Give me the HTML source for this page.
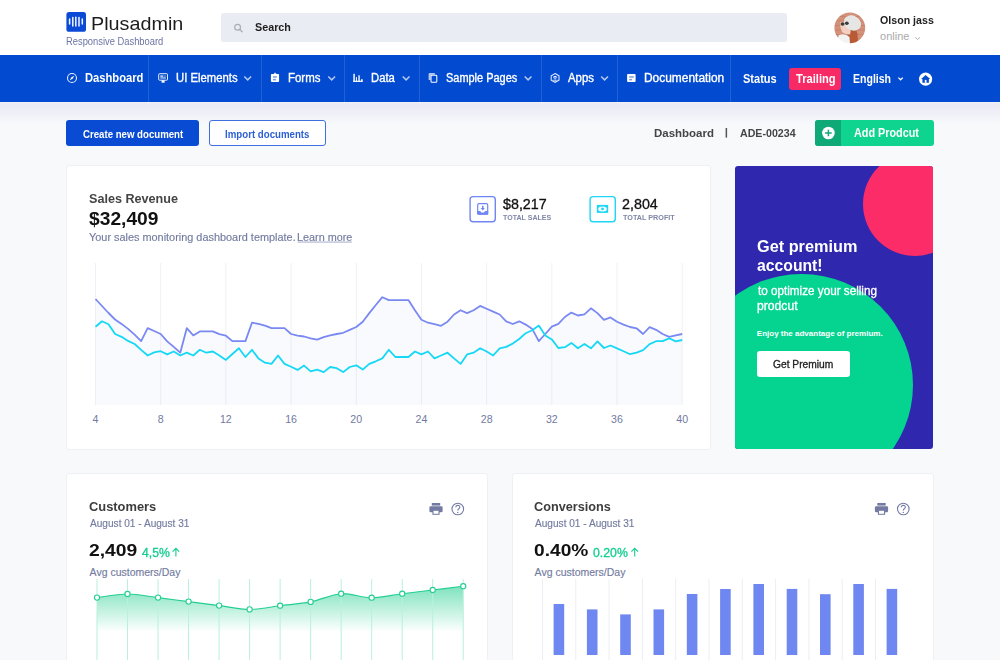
<!DOCTYPE html>
<html><head><meta charset="utf-8">
<style>
*{box-sizing:border-box;margin:0;padding:0}
html,body{width:1000px;height:660px;overflow:hidden}
body{font-family:"Liberation Sans",sans-serif;background:#f8f9fb;position:relative;color:#333}
.abs{position:absolute}
.t{position:absolute;white-space:nowrap;line-height:normal;transform-origin:0 0}
.sep{position:absolute;top:55px;width:1px;height:47px;background:rgba(255,255,255,0.13)}
.card{position:absolute;background:#fff;border:1px solid #eef0f6;border-radius:3px}
svg{overflow:visible}
</style></head><body>
<div class="abs" style="left:0;top:0;width:1000px;height:55px;background:#fff"></div>
<div class="abs" style="left:0;top:55px;width:1000px;height:47px;background:#024acf"></div>
<div class="abs" style="left:0;top:102px;width:1000px;height:24px;background:linear-gradient(#f1f0f8 0px,#e9e8f4 3px,#f8f9fc 22px)"></div>

<!-- cards -->
<div class="card" style="left:66px;top:165px;width:644.5px;height:284.5px"></div>
<div class="abs" style="left:735px;top:165.6px;width:198px;height:283.2px;background:#2f27ae;border-radius:3px;overflow:hidden">
  <div class="abs" style="left:127.5px;top:-14px;width:104px;height:104px;border-radius:50%;background:#fb2c68"></div>
  <div class="abs" style="left:-44.7px;top:108.2px;width:222.4px;height:222.4px;border-radius:50%;background:#05d390"></div>
</div>
<div class="card" style="left:66px;top:473px;width:421.5px;height:200px"></div>
<div class="card" style="left:512px;top:473px;width:421.5px;height:200px"></div>

<!-- search bar -->
<div class="abs" style="left:221px;top:12.6px;width:566px;height:29.9px;background:#e9ecf3;border-radius:2.5px"></div>

<!-- trailing badge -->
<div class="abs" style="left:789px;top:68px;width:51.6px;height:21.6px;background:#f72a66;border-radius:3px"></div>

<!-- separators -->
<div class="sep" style="left:148px"></div>
<div class="sep" style="left:261px"></div>
<div class="sep" style="left:344px"></div>
<div class="sep" style="left:419px"></div>
<div class="sep" style="left:540.5px"></div>
<div class="sep" style="left:617px"></div>
<div class="sep" style="left:730px"></div>

<!-- buttons -->
<div class="abs" style="left:66.3px;top:119.7px;width:132.4px;height:26px;background:#0a4bd3;border-radius:3px"></div>
<div class="abs" style="left:208.7px;top:119.7px;width:117px;height:26px;background:#fff;border:1px solid #3f6ee0;border-radius:3px"></div>
<div class="abs" style="left:815px;top:119.7px;width:118.6px;height:26px;background:#0fd490;border-radius:3px;overflow:hidden"><div class="abs" style="left:0;top:0;width:26.1px;height:26px;background:#0fa877"></div></div>
<div class="abs" style="left:757px;top:351.1px;width:92.9px;height:26px;background:#fff;border-radius:3px"></div>

<svg class="abs" style="left:0;top:0" width="1000" height="660" viewBox="0 0 1000 660"><line x1="95.50" y1="263" x2="95.50" y2="405" stroke="#f0f1f6" stroke-width="1"/><line x1="160.69" y1="263" x2="160.69" y2="405" stroke="#f0f1f6" stroke-width="1"/><line x1="225.88" y1="263" x2="225.88" y2="405" stroke="#f0f1f6" stroke-width="1"/><line x1="291.07" y1="263" x2="291.07" y2="405" stroke="#f0f1f6" stroke-width="1"/><line x1="356.26" y1="263" x2="356.26" y2="405" stroke="#f0f1f6" stroke-width="1"/><line x1="421.45" y1="263" x2="421.45" y2="405" stroke="#f0f1f6" stroke-width="1"/><line x1="486.64" y1="263" x2="486.64" y2="405" stroke="#f0f1f6" stroke-width="1"/><line x1="551.83" y1="263" x2="551.83" y2="405" stroke="#f0f1f6" stroke-width="1"/><line x1="617.02" y1="263" x2="617.02" y2="405" stroke="#f0f1f6" stroke-width="1"/><line x1="682.21" y1="263" x2="682.21" y2="405" stroke="#f0f1f6" stroke-width="1"/><polygon points="95.50,405 95.50,299.00 102.02,306.00 108.54,313.00 115.06,319.50 121.58,323.90 128.09,328.90 134.61,334.70 141.13,341.10 147.65,328.20 154.17,331.00 160.69,334.00 167.21,341.40 173.73,346.90 180.25,352.70 186.76,328.20 193.28,335.40 199.80,331.40 206.32,331.40 212.84,331.40 219.36,334.20 225.88,335.70 232.40,341.10 238.92,341.10 245.43,341.10 251.95,322.70 258.47,323.90 264.99,325.60 271.51,328.20 278.03,328.20 284.55,328.20 291.07,334.00 297.59,335.70 304.10,336.50 310.62,338.30 317.14,339.70 323.66,337.10 330.18,335.40 336.70,334.00 343.22,332.80 349.74,329.90 356.26,327.00 362.77,321.70 369.29,313.10 375.81,305.00 382.33,297.20 388.85,300.10 395.37,300.10 401.89,300.10 408.41,300.10 414.93,310.20 421.44,319.80 427.96,322.70 434.48,324.20 441.00,325.80 447.52,321.70 454.04,314.50 460.56,310.20 467.08,313.10 473.60,310.20 480.11,305.90 486.63,308.80 493.15,311.60 499.67,314.50 506.19,321.30 512.71,324.00 519.23,321.30 525.75,324.60 532.27,328.90 538.78,341.10 545.30,334.00 551.82,326.70 558.34,323.90 564.86,317.00 571.38,312.60 577.90,315.50 584.42,314.30 590.94,308.30 597.45,313.10 603.97,319.80 610.49,317.40 617.01,321.70 623.53,324.60 630.05,327.00 636.57,328.30 643.09,334.00 649.61,327.20 656.12,329.80 662.64,334.00 669.16,336.80 675.68,335.40 682.20,334.00 682.2,405" fill="#7080ea" fill-opacity="0.045"/><polygon points="95.50,405 95.50,326.70 102.02,321.30 108.54,324.20 115.06,334.00 121.58,336.80 128.09,340.90 134.61,344.00 141.13,349.80 147.65,355.50 154.17,352.40 160.69,351.20 167.21,354.40 173.73,351.50 180.25,355.50 186.76,352.70 193.28,355.50 199.80,349.80 206.32,352.70 212.84,351.50 219.36,355.50 225.88,359.90 232.40,354.00 238.92,348.30 245.43,357.00 251.95,349.80 258.47,358.40 264.99,362.70 271.51,363.90 278.03,355.50 284.55,363.90 291.07,366.80 297.59,369.90 304.10,365.60 310.62,371.40 317.14,369.60 323.66,372.10 330.18,367.00 336.70,368.20 343.22,372.10 349.74,367.00 356.26,365.30 362.77,369.60 369.29,363.90 375.81,361.30 382.33,358.40 388.85,349.80 395.37,357.00 401.89,357.00 408.41,357.00 414.93,351.50 421.44,354.40 427.96,351.50 434.48,358.40 441.00,355.50 447.52,352.70 454.04,358.40 460.56,363.90 467.08,354.40 473.60,352.70 480.11,348.30 486.63,351.50 493.15,355.50 499.67,348.30 506.19,346.90 512.71,343.60 519.23,339.00 525.75,333.20 532.27,330.30 538.78,325.60 545.30,335.40 551.82,339.40 558.34,348.00 564.86,347.20 571.38,342.90 577.90,348.30 584.42,344.00 590.94,348.30 597.45,341.40 603.97,348.00 610.49,345.50 617.01,348.30 623.53,351.20 630.05,354.20 636.57,352.70 643.09,350.10 649.61,344.10 656.12,341.20 662.64,341.10 669.16,338.30 675.68,341.40 682.20,340.00 682.2,405" fill="#1fd3f0" fill-opacity="0"/>
<polyline points="95.50,299.00 102.02,306.00 108.54,313.00 115.06,319.50 121.58,323.90 128.09,328.90 134.61,334.70 141.13,341.10 147.65,328.20 154.17,331.00 160.69,334.00 167.21,341.40 173.73,346.90 180.25,352.70 186.76,328.20 193.28,335.40 199.80,331.40 206.32,331.40 212.84,331.40 219.36,334.20 225.88,335.70 232.40,341.10 238.92,341.10 245.43,341.10 251.95,322.70 258.47,323.90 264.99,325.60 271.51,328.20 278.03,328.20 284.55,328.20 291.07,334.00 297.59,335.70 304.10,336.50 310.62,338.30 317.14,339.70 323.66,337.10 330.18,335.40 336.70,334.00 343.22,332.80 349.74,329.90 356.26,327.00 362.77,321.70 369.29,313.10 375.81,305.00 382.33,297.20 388.85,300.10 395.37,300.10 401.89,300.10 408.41,300.10 414.93,310.20 421.44,319.80 427.96,322.70 434.48,324.20 441.00,325.80 447.52,321.70 454.04,314.50 460.56,310.20 467.08,313.10 473.60,310.20 480.11,305.90 486.63,308.80 493.15,311.60 499.67,314.50 506.19,321.30 512.71,324.00 519.23,321.30 525.75,324.60 532.27,328.90 538.78,341.10 545.30,334.00 551.82,326.70 558.34,323.90 564.86,317.00 571.38,312.60 577.90,315.50 584.42,314.30 590.94,308.30 597.45,313.10 603.97,319.80 610.49,317.40 617.01,321.70 623.53,324.60 630.05,327.00 636.57,328.30 643.09,334.00 649.61,327.20 656.12,329.80 662.64,334.00 669.16,336.80 675.68,335.40 682.20,334.00" fill="none" stroke="#7a89f2" stroke-width="1.8" stroke-linejoin="round"/>
<polyline points="95.50,326.70 102.02,321.30 108.54,324.20 115.06,334.00 121.58,336.80 128.09,340.90 134.61,344.00 141.13,349.80 147.65,355.50 154.17,352.40 160.69,351.20 167.21,354.40 173.73,351.50 180.25,355.50 186.76,352.70 193.28,355.50 199.80,349.80 206.32,352.70 212.84,351.50 219.36,355.50 225.88,359.90 232.40,354.00 238.92,348.30 245.43,357.00 251.95,349.80 258.47,358.40 264.99,362.70 271.51,363.90 278.03,355.50 284.55,363.90 291.07,366.80 297.59,369.90 304.10,365.60 310.62,371.40 317.14,369.60 323.66,372.10 330.18,367.00 336.70,368.20 343.22,372.10 349.74,367.00 356.26,365.30 362.77,369.60 369.29,363.90 375.81,361.30 382.33,358.40 388.85,349.80 395.37,357.00 401.89,357.00 408.41,357.00 414.93,351.50 421.44,354.40 427.96,351.50 434.48,358.40 441.00,355.50 447.52,352.70 454.04,358.40 460.56,363.90 467.08,354.40 473.60,352.70 480.11,348.30 486.63,351.50 493.15,355.50 499.67,348.30 506.19,346.90 512.71,343.60 519.23,339.00 525.75,333.20 532.27,330.30 538.78,325.60 545.30,335.40 551.82,339.40 558.34,348.00 564.86,347.20 571.38,342.90 577.90,348.30 584.42,344.00 590.94,348.30 597.45,341.40 603.97,348.00 610.49,345.50 617.01,348.30 623.53,351.20 630.05,354.20 636.57,352.70 643.09,350.10 649.61,344.10 656.12,341.20 662.64,341.10 669.16,338.30 675.68,341.40 682.20,340.00" fill="none" stroke="#16d8f5" stroke-width="1.8" stroke-linejoin="round"/><text x="95.50" y="422.8" text-anchor="middle" font-size="10.6" fill="#717a9f" font-family="Liberation Sans">4</text><text x="160.69" y="422.8" text-anchor="middle" font-size="10.6" fill="#717a9f" font-family="Liberation Sans">8</text><text x="225.88" y="422.8" text-anchor="middle" font-size="10.6" fill="#717a9f" font-family="Liberation Sans">12</text><text x="291.07" y="422.8" text-anchor="middle" font-size="10.6" fill="#717a9f" font-family="Liberation Sans">16</text><text x="356.26" y="422.8" text-anchor="middle" font-size="10.6" fill="#717a9f" font-family="Liberation Sans">20</text><text x="421.45" y="422.8" text-anchor="middle" font-size="10.6" fill="#717a9f" font-family="Liberation Sans">24</text><text x="486.64" y="422.8" text-anchor="middle" font-size="10.6" fill="#717a9f" font-family="Liberation Sans">28</text><text x="551.83" y="422.8" text-anchor="middle" font-size="10.6" fill="#717a9f" font-family="Liberation Sans">32</text><text x="617.02" y="422.8" text-anchor="middle" font-size="10.6" fill="#717a9f" font-family="Liberation Sans">36</text><text x="682.21" y="422.8" text-anchor="middle" font-size="10.6" fill="#717a9f" font-family="Liberation Sans">40</text></svg>
<svg class="abs" style="left:0;top:0" width="1000" height="660" viewBox="0 0 1000 660"><defs><linearGradient id="gg" x1="0" y1="0" x2="0" y2="1" gradientUnits="objectBoundingBox"><stop offset="0" stop-color="#7fe3bf"/><stop offset="0.62" stop-color="#ffffff"/><stop offset="1" stop-color="#ffffff"/></linearGradient></defs><path d="M97.00,597.60 C102.09,597.00 117.35,594.00 127.52,594.00 C137.69,594.00 147.87,596.33 158.04,597.60 C168.21,598.87 178.39,600.27 188.56,601.60 C198.73,602.93 208.91,604.30 219.08,605.60 C229.25,606.90 239.43,609.38 249.60,609.40 C259.77,609.42 269.95,606.95 280.12,605.70 C290.29,604.45 300.47,603.90 310.64,601.90 C320.81,599.90 330.99,594.40 341.16,593.70 C351.33,593.00 361.51,597.70 371.68,597.70 C381.85,597.70 392.03,594.98 402.20,593.70 C412.37,592.42 422.55,591.25 432.72,590.00 C442.89,588.75 458.15,586.83 463.24,586.20 L463.24,660 L97.00,660 Z" fill="url(#gg)"/><line x1="97.00" y1="579" x2="97.00" y2="660" stroke="#b9f0dc" stroke-width="1"/><line x1="127.52" y1="579" x2="127.52" y2="660" stroke="#b9f0dc" stroke-width="1"/><line x1="158.04" y1="579" x2="158.04" y2="660" stroke="#b9f0dc" stroke-width="1"/><line x1="188.56" y1="579" x2="188.56" y2="660" stroke="#b9f0dc" stroke-width="1"/><line x1="219.08" y1="579" x2="219.08" y2="660" stroke="#b9f0dc" stroke-width="1"/><line x1="249.60" y1="579" x2="249.60" y2="660" stroke="#b9f0dc" stroke-width="1"/><line x1="280.12" y1="579" x2="280.12" y2="660" stroke="#b9f0dc" stroke-width="1"/><line x1="310.64" y1="579" x2="310.64" y2="660" stroke="#b9f0dc" stroke-width="1"/><line x1="341.16" y1="579" x2="341.16" y2="660" stroke="#b9f0dc" stroke-width="1"/><line x1="371.68" y1="579" x2="371.68" y2="660" stroke="#b9f0dc" stroke-width="1"/><line x1="402.20" y1="579" x2="402.20" y2="660" stroke="#b9f0dc" stroke-width="1"/><line x1="432.72" y1="579" x2="432.72" y2="660" stroke="#b9f0dc" stroke-width="1"/><line x1="463.24" y1="579" x2="463.24" y2="660" stroke="#b9f0dc" stroke-width="1"/><path d="M97.00,597.60 C102.09,597.00 117.35,594.00 127.52,594.00 C137.69,594.00 147.87,596.33 158.04,597.60 C168.21,598.87 178.39,600.27 188.56,601.60 C198.73,602.93 208.91,604.30 219.08,605.60 C229.25,606.90 239.43,609.38 249.60,609.40 C259.77,609.42 269.95,606.95 280.12,605.70 C290.29,604.45 300.47,603.90 310.64,601.90 C320.81,599.90 330.99,594.40 341.16,593.70 C351.33,593.00 361.51,597.70 371.68,597.70 C381.85,597.70 392.03,594.98 402.20,593.70 C412.37,592.42 422.55,591.25 432.72,590.00 C442.89,588.75 458.15,586.83 463.24,586.20" fill="none" stroke="#22cf91" stroke-width="1.1"/><circle cx="97.00" cy="597.60" r="2.6" fill="#fff" stroke="#22cf91" stroke-width="1.1"/><circle cx="127.52" cy="594.00" r="2.6" fill="#fff" stroke="#22cf91" stroke-width="1.1"/><circle cx="158.04" cy="597.60" r="2.6" fill="#fff" stroke="#22cf91" stroke-width="1.1"/><circle cx="188.56" cy="601.60" r="2.6" fill="#fff" stroke="#22cf91" stroke-width="1.1"/><circle cx="219.08" cy="605.60" r="2.6" fill="#fff" stroke="#22cf91" stroke-width="1.1"/><circle cx="249.60" cy="609.40" r="2.6" fill="#fff" stroke="#22cf91" stroke-width="1.1"/><circle cx="280.12" cy="605.70" r="2.6" fill="#fff" stroke="#22cf91" stroke-width="1.1"/><circle cx="310.64" cy="601.90" r="2.6" fill="#fff" stroke="#22cf91" stroke-width="1.1"/><circle cx="341.16" cy="593.70" r="2.6" fill="#fff" stroke="#22cf91" stroke-width="1.1"/><circle cx="371.68" cy="597.70" r="2.6" fill="#fff" stroke="#22cf91" stroke-width="1.1"/><circle cx="402.20" cy="593.70" r="2.6" fill="#fff" stroke="#22cf91" stroke-width="1.1"/><circle cx="432.72" cy="590.00" r="2.6" fill="#fff" stroke="#22cf91" stroke-width="1.1"/><circle cx="463.24" cy="586.20" r="2.6" fill="#fff" stroke="#22cf91" stroke-width="1.1"/><line x1="542.50" y1="579" x2="542.50" y2="660" stroke="#eceef4" stroke-width="1"/><line x1="575.80" y1="579" x2="575.80" y2="660" stroke="#eceef4" stroke-width="1"/><line x1="609.10" y1="579" x2="609.10" y2="660" stroke="#eceef4" stroke-width="1"/><line x1="642.40" y1="579" x2="642.40" y2="660" stroke="#eceef4" stroke-width="1"/><line x1="675.70" y1="579" x2="675.70" y2="660" stroke="#eceef4" stroke-width="1"/><line x1="709.00" y1="579" x2="709.00" y2="660" stroke="#eceef4" stroke-width="1"/><line x1="742.30" y1="579" x2="742.30" y2="660" stroke="#eceef4" stroke-width="1"/><line x1="775.60" y1="579" x2="775.60" y2="660" stroke="#eceef4" stroke-width="1"/><line x1="808.90" y1="579" x2="808.90" y2="660" stroke="#eceef4" stroke-width="1"/><line x1="842.20" y1="579" x2="842.20" y2="660" stroke="#eceef4" stroke-width="1"/><line x1="875.50" y1="579" x2="875.50" y2="660" stroke="#eceef4" stroke-width="1"/><rect x="553.60" y="604.00" width="10.6" height="51.00" fill="#6f87f0"/><rect x="586.90" y="609.40" width="10.6" height="45.60" fill="#6f87f0"/><rect x="620.20" y="614.40" width="10.6" height="40.60" fill="#6f87f0"/><rect x="653.50" y="609.40" width="10.6" height="45.60" fill="#6f87f0"/><rect x="686.80" y="594.00" width="10.6" height="61.00" fill="#6f87f0"/><rect x="720.10" y="589.00" width="10.6" height="66.00" fill="#6f87f0"/><rect x="753.40" y="584.00" width="10.6" height="71.00" fill="#6f87f0"/><rect x="786.70" y="588.90" width="10.6" height="66.10" fill="#6f87f0"/><rect x="820.00" y="594.20" width="10.6" height="60.80" fill="#6f87f0"/><rect x="853.30" y="584.00" width="10.6" height="71.00" fill="#6f87f0"/><rect x="886.60" y="588.90" width="10.6" height="66.10" fill="#6f87f0"/></svg>

<svg class="abs" style="left:0;top:0" width="1000" height="660" viewBox="0 0 1000 660">
  <!-- logo -->
  <rect x="66.4" y="12" width="19.6" height="19.8" rx="2.6" fill="#0b4ad6"/>
  <g stroke="#fff" stroke-width="1.5" stroke-linecap="round" opacity="0.95">
    <line x1="69.6" y1="18.9" x2="69.6" y2="24"/>
    <line x1="72.8" y1="17.5" x2="72.8" y2="25.9"/>
    <line x1="75.8" y1="17.2" x2="75.8" y2="25.9"/>
    <line x1="79" y1="17.5" x2="79" y2="25.9"/>
    <line x1="82.3" y1="18.9" x2="82.3" y2="24"/>
  </g>
  <!-- search icon -->
  <circle cx="237.6" cy="27.3" r="2.9" fill="none" stroke="#a9acb4" stroke-width="1.2"/>
  <line x1="239.8" y1="29.5" x2="242.2" y2="31.7" stroke="#a9acb4" stroke-width="1.3" stroke-linecap="round"/>
  <!-- avatar -->
  <defs><clipPath id="av"><circle cx="849.8" cy="27.8" r="15.4"/></clipPath></defs>
  <filter id="blr" x="-10%" y="-10%" width="120%" height="120%"><feGaussianBlur stdDeviation="0.45"/></filter>
  <g clip-path="url(#av)"><g filter="url(#blr)">
    <rect x="834" y="12" width="32" height="32" fill="#d4917a"/>
    <g stroke="#b8705a" stroke-width="0.7" opacity="0.6">
      <line x1="834" y1="16.5" x2="866" y2="16.5"/><line x1="834" y1="21" x2="866" y2="21"/><line x1="834" y1="25.5" x2="866" y2="25.5"/><line x1="834" y1="30" x2="866" y2="30"/><line x1="834" y1="34.5" x2="866" y2="34.5"/><line x1="834" y1="39" x2="866" y2="39"/>
    </g>
    <path d="M849 24 Q856 26 857.5 34 Q858.5 40 857 44 L847 44 Q848.5 35 846 28 Z" fill="#b85a36"/>
    <path d="M840.5 22 Q846 21 849.5 25 Q851.5 30 850 34.5 Q846 35 842 32 Q839.5 27 840.5 22 Z" fill="#f1d0c3"/>
    <path d="M839 35 Q845 33 849.5 37 L850 44 L836 44 Z" fill="#f3f3f3"/>
    <ellipse cx="852.5" cy="23" rx="9" ry="7.2" transform="rotate(28 852.5 23)" fill="#e6e7e5"/>
    <ellipse cx="842.6" cy="24" rx="1.9" ry="1.7" fill="#3a3a3a"/><ellipse cx="846.8" cy="23.2" rx="1.9" ry="1.7" fill="#3a3a3a"/>
  </g></g>
  <!-- online chevron -->
  <polyline points="915.2,37.3 917.6,39.5 920,37.3" fill="none" stroke="#b0b0b0" stroke-width="1"/>

  <!-- nav icons -->
  <circle cx="72" cy="78" r="4.5" fill="none" stroke="#fff" stroke-width="1.1" opacity="0.9"/>
  <path d="M74.3 75.8 L72.6 78.7 L69.7 80.3 L71.4 77.3 Z" fill="#fff"/>
  <!-- monitor -->
  <rect x="158.7" y="73.7" width="8.8" height="6.5" rx="0.8" fill="none" stroke="#fff" stroke-width="1" opacity="0.9"/>
  <rect x="160.3" y="75.5" width="2.7" height="1.2" fill="#fff"/>
  <rect x="163.4" y="75.6" width="2.5" height="0.9" fill="#fff" opacity="0.6"/>
  <rect x="160.3" y="77.4" width="5.6" height="1.1" fill="#fff" opacity="0.85"/>
  <rect x="161.6" y="80.3" width="3" height="2.4" fill="#fff"/>
  <!-- clipboard -->
  <rect x="270.9" y="73.9" width="8.2" height="8" rx="0.8" fill="#fff"/>
  <rect x="274" y="72.7" width="2.2" height="1.6" rx="0.5" fill="#fff" opacity="0.8"/>
  <rect x="272.9" y="76.2" width="3.9" height="1.5" fill="#7e9de6"/>
  <rect x="272.9" y="78.9" width="3.1" height="1.5" fill="#7e9de6"/>
  <!-- bars icon -->
  <g fill="#fff">
    <rect x="353.2" y="73.8" width="1.8" height="8" opacity="0.8"/>
    <rect x="355.9" y="77.1" width="1" height="4.6"/>
    <rect x="358.3" y="75.3" width="1.5" height="6.4" opacity="0.9"/>
    <rect x="361.1" y="79.2" width="1.5" height="2.6"/>
    <rect x="353.2" y="80.7" width="9.4" height="1.2"/>
  </g>
  <!-- copy icon -->
  <path d="M428.6 80 V74.2 Q428.6 73.1 429.7 73.1 H434.8 V74.7 H431.5 Q430.5 74.7 430.5 75.7 V80 Z" fill="#fff" opacity="0.7"/>
  <rect x="431" y="75.2" width="5.8" height="7.1" rx="0.9" fill="none" stroke="#fff" stroke-width="1.05"/>
  <!-- hexagon -->
  <path d="M555.1 73.5 L559 75.7 L559 80.1 L555.1 82.3 L551.2 80.1 L551.2 75.7 Z" fill="none" stroke="#fff" stroke-width="1.05" opacity="0.9"/>
  <ellipse cx="555.1" cy="76.7" rx="1.7" ry="0.7" fill="#fff"/>
  <path d="M553 77.4 L555.1 78.6 L557.2 77.4 M555.1 78.6 V80.2 M552.8 80 Q555.1 81.2 557.4 80" fill="none" stroke="#fff" stroke-width="0.8" opacity="0.8"/>
  <!-- documentation -->
  <rect x="627.1" y="73.9" width="8.5" height="8" rx="0.9" fill="#fff"/>
  <rect x="629.2" y="76.2" width="4.6" height="1.5" fill="#7e9de6"/>
  <rect x="629.2" y="78.9" width="2.8" height="1.5" fill="#7e9de6"/>
  <!-- chevrons -->
  <g fill="none" stroke="rgba(255,255,255,0.7)" stroke-width="1.5">
    <polyline points="244.3,76.5 247.7,79.9 251.1,76.5"/>
    <polyline points="328.3,76.5 331.7,79.9 335.1,76.5"/>
    <polyline points="402.7,76.5 406.1,79.9 409.5,76.5"/>
    <polyline points="524.7,76.5 528.1,79.9 531.5,76.5"/>
    <polyline points="601.2,76.5 604.6,79.9 608,76.5"/>
  </g>
  <polyline points="898.4,77.6 900.6,79.8 902.8,77.6" fill="none" stroke="#fff" stroke-width="1.3"/>
  <!-- home -->
  <circle cx="925.6" cy="79.1" r="6.6" fill="#fff"/>
  <path d="M925.6 74.9 L930.2 78.9 L928.9 78.9 L928.9 82.7 L922.4 82.7 L922.4 78.9 L921.1 78.9 Z" fill="#044bd0"/>
  <rect x="924.8" y="79.9" width="1.7" height="2.9" fill="#fff"/>

  <!-- add product plus -->
  <circle cx="828.4" cy="133" r="6.3" fill="#fff"/>
  <path d="M828.4 129.7 V136.3 M825.1 133 H831.7" stroke="#0fa877" stroke-width="1.5"/>
  <!-- breadcrumb bar -->
  <rect x="725.6" y="128" width="1.5" height="9.6" fill="#555"/>

  <!-- stat boxes -->
  <rect x="470.1" y="196.6" width="25.2" height="25.2" rx="3" fill="none" stroke="#6f86f4" stroke-width="1.4"/>
  <rect x="477.7" y="203.7" width="10" height="10.4" rx="1.3" fill="none" stroke="#6f86f4" stroke-width="1.2"/>
  <path d="M477.2 210.9 h3 l1.2 1.6 h2.6 l1.2 -1.6 h3 v3.3 Q488.2 214.8 487.4 214.8 h-9.4 Q477.2 214.8 477.2 214 Z" fill="#6f86f4"/>
  <path d="M482 205.8 h1.5 v2.2 h1.4 l-2.15 2.4 l-2.15 -2.4 h1.4 Z" fill="#6f86f4"/>
  <rect x="590.1" y="196.6" width="25.2" height="25.2" rx="3" fill="none" stroke="#1fd6f5" stroke-width="1.4"/>
  <rect x="596.8" y="204.9" width="11.4" height="8" fill="#1fd6f5"/>
  <ellipse cx="602.5" cy="208.9" rx="4.3" ry="2.5" fill="#fff"/>
  <circle cx="602.5" cy="208.9" r="1.4" fill="#1fd6f5"/>

  <!-- print/help icons -->
  <g id="ph">
    <rect x="431.8" y="503" width="8.4" height="2.6" fill="#737ba3"/>
    <rect x="429.4" y="506.3" width="13.2" height="6" rx="1.3" fill="#737ba3"/>
    <rect x="432.4" y="510" width="7.2" height="4.8" fill="#737ba3"/>
    <rect x="433.5" y="510.8" width="5" height="3" fill="#fff"/>
    <circle cx="457.8" cy="509" r="5.8" fill="none" stroke="#737ba3" stroke-width="1.1"/>
    <path d="M455.8 507.3 Q455.9 505.2 457.9 505.2 Q459.9 505.3 459.9 507.1 Q459.9 508.3 458.6 509 Q457.8 509.5 457.8 510.6" fill="none" stroke="#737ba3" stroke-width="1.1"/>
    <circle cx="457.8" cy="512.4" r="0.7" fill="#737ba3"/>
  </g>
  <use href="#ph" x="445.5" y="0"/>
  <!-- arrows up -->
  <g stroke="#12cf8e" stroke-width="1.1" fill="none">
    <path d="M175.9 548.5 V556.4 M172.6 551.6 L175.9 548.3 L179.2 551.6"/>
    <path d="M634.7 548.5 V556.4 M631.4 551.6 L634.7 548.3 L638 551.6"/>
  </g>
  <!-- learn more underline -->
  <rect x="297.6" y="241.6" width="54.2" height="0.9" fill="#9aa1c2"/>
</svg>

<div class="t" style="left:90.94px;top:12.70px;font-size:19px;font-weight:normal;color:#1c1c1c;transform:scaleX(1.0402);">Plusadmin</div>
<div class="t" style="left:66.25px;top:35.55px;font-size:10px;font-weight:normal;color:#6a74a4;transform:scaleX(0.9358);">Responsive Dashboard</div>
<div class="t" style="left:255.21px;top:21.05px;font-size:11px;font-weight:bold;color:#1e1e1e;transform:scaleX(0.9785);">Search</div>
<div class="t" style="left:880.11px;top:14.24px;font-size:11px;font-weight:bold;color:#222222;transform:scaleX(0.9669);">Olson jass</div>
<div class="t" style="left:880.10px;top:29.84px;font-size:11px;font-weight:normal;color:#aaaaaa;">online</div>
<div class="t" style="left:84.75px;top:70.94px;font-size:12px;font-weight:bold;color:#ffffff;transform:scaleX(0.9322);">Dashboard</div>
<div class="t" style="left:175.65px;top:70.74px;font-size:12px;font-weight:normal;color:#ffffff;transform:scaleX(0.9414);-webkit-text-stroke:0.35px #ffffff;">UI Elements</div>
<div class="t" style="left:287.94px;top:70.74px;font-size:12px;font-weight:normal;color:#ffffff;transform:scaleX(0.9542);-webkit-text-stroke:0.35px #ffffff;">Forms</div>
<div class="t" style="left:370.95px;top:70.74px;font-size:12px;font-weight:normal;color:#ffffff;transform:scaleX(0.9398);-webkit-text-stroke:0.35px #ffffff;">Data</div>
<div class="t" style="left:446.14px;top:70.74px;font-size:12px;font-weight:normal;color:#ffffff;transform:scaleX(0.9125);-webkit-text-stroke:0.35px #ffffff;">Sample Pages</div>
<div class="t" style="left:568.00px;top:70.74px;font-size:12px;font-weight:normal;color:#ffffff;transform:scaleX(0.9461);-webkit-text-stroke:0.35px #ffffff;">Apps</div>
<div class="t" style="left:644.30px;top:70.74px;font-size:12px;font-weight:normal;color:#ffffff;transform:scaleX(0.9944);-webkit-text-stroke:0.35px #ffffff;">Documentation</div>
<div class="t" style="left:742.92px;top:71.74px;font-size:12px;font-weight:bold;color:#ffffff;transform:scaleX(0.9192);">Status</div>
<div class="t" style="left:795.51px;top:71.74px;font-size:12px;font-weight:bold;color:#ffffff;transform:scaleX(0.9273);">Trailing</div>
<div class="t" style="left:853.10px;top:71.64px;font-size:12px;font-weight:bold;color:#ffffff;transform:scaleX(0.8779);">English</div>
<div class="t" style="left:82.73px;top:127.70px;font-size:10.5px;font-weight:bold;color:#ffffff;transform:scaleX(0.9180);">Create new document</div>
<div class="t" style="left:224.85px;top:127.70px;font-size:10.5px;font-weight:bold;color:#2c5fd6;transform:scaleX(0.9222);">Import documents</div>
<div class="t" style="left:653.87px;top:126.95px;font-size:11px;font-weight:bold;color:#454545;transform:scaleX(1.0422);">Dashboard</div>
<div class="t" style="left:740.31px;top:126.95px;font-size:11px;font-weight:bold;color:#454545;transform:scaleX(0.9675);">ADE-00234</div>
<div class="t" style="left:853.52px;top:126.14px;font-size:12px;font-weight:bold;color:#ffffff;transform:scaleX(0.9024);">Add Prodcut</div>
<div class="t" style="left:89.11px;top:191.33px;font-size:13px;font-weight:bold;color:#444444;transform:scaleX(0.9688);">Sales Revenue</div>
<div class="t" style="left:89.18px;top:208.66px;font-size:17.5px;font-weight:bold;color:#111111;transform:scaleX(1.0989);">$32,409</div>
<div class="t" style="left:89.20px;top:230.64px;font-size:11px;font-weight:normal;color:#737b9f;transform:scaleX(0.9901);-webkit-text-stroke:0.15px #737b9f;">Your sales monitoring dashboard template.</div>
<div class="t" style="left:296.71px;top:230.64px;font-size:11px;font-weight:normal;color:#737b9f;transform:scaleX(0.9848);-webkit-text-stroke:0.15px #737b9f;">Learn more</div>
<div class="t" style="left:502.80px;top:195.98px;font-size:14px;font-weight:normal;color:#111111;transform:scaleX(1.0206);-webkit-text-stroke:0.3px #111111;">$8,217</div>
<div class="t" style="left:502.90px;top:212.76px;font-size:8px;font-weight:bold;color:#7f86a6;transform:scaleX(0.8813);">TOTAL SALES</div>
<div class="t" style="left:622.18px;top:195.98px;font-size:14px;font-weight:normal;color:#111111;transform:scaleX(1.0222);-webkit-text-stroke:0.3px #111111;">2,804</div>
<div class="t" style="left:622.90px;top:212.76px;font-size:8px;font-weight:bold;color:#7f86a6;transform:scaleX(0.9028);">TOTAL PROFIT</div>
<div class="t" style="left:756.99px;top:238.42px;font-size:16px;font-weight:bold;color:#ffffff;transform:scaleX(1.0169);">Get premium</div>
<div class="t" style="left:757.21px;top:256.72px;font-size:16px;font-weight:bold;color:#ffffff;transform:scaleX(0.9839);">account!</div>
<div class="t" style="left:757.50px;top:283.64px;font-size:12px;font-weight:normal;color:#ffffff;transform:scaleX(0.9746);-webkit-text-stroke:0.3px #ffffff;">to optimize your selling</div>
<div class="t" style="left:756.89px;top:299.44px;font-size:12px;font-weight:normal;color:#ffffff;transform:scaleX(1.0129);-webkit-text-stroke:0.3px #ffffff;">prodcut</div>
<div class="t" style="left:756.80px;top:328.56px;font-size:8px;font-weight:bold;color:#ffffff;">Enjoy the advantage of premium.</div>
<div class="t" style="left:773.29px;top:358.85px;font-size:10px;font-weight:normal;color:#222222;transform:scaleX(1.0230);-webkit-text-stroke:0.3px #222222;">Get Premium</div>
<div class="t" style="left:89.08px;top:500.39px;font-size:12.5px;font-weight:bold;color:#3d3d3d;transform:scaleX(1.0304);">Customers</div>
<div class="t" style="left:89.60px;top:517.40px;font-size:10.5px;font-weight:normal;color:#737b9f;transform:scaleX(0.9617);-webkit-text-stroke:0.15px #737b9f;">August 01 - August 31</div>
<div class="t" style="left:89.03px;top:541.12px;font-size:17px;font-weight:bold;color:#111111;transform:scaleX(1.1353);">2,409</div>
<div class="t" style="left:142.10px;top:545.64px;font-size:12px;font-weight:normal;color:#12cf8e;transform:scaleX(1.0156);-webkit-text-stroke:0.3px #12cf8e;">4,5%</div>
<div class="t" style="left:89.60px;top:565.70px;font-size:10.5px;font-weight:normal;color:#737b9f;-webkit-text-stroke:0.15px #737b9f;">Avg customers/Day</div>
<div class="t" style="left:534.09px;top:500.39px;font-size:12.5px;font-weight:bold;color:#3d3d3d;transform:scaleX(1.0152);">Conversions</div>
<div class="t" style="left:534.60px;top:517.40px;font-size:10.5px;font-weight:normal;color:#737b9f;transform:scaleX(0.9617);-webkit-text-stroke:0.15px #737b9f;">August 01 - August 31</div>
<div class="t" style="left:533.92px;top:541.12px;font-size:17px;font-weight:bold;color:#111111;transform:scaleX(1.1274);">0.40%</div>
<div class="t" style="left:593.49px;top:545.64px;font-size:12px;font-weight:normal;color:#12cf8e;transform:scaleX(1.0224);-webkit-text-stroke:0.3px #12cf8e;">0.20%</div>
<div class="t" style="left:534.60px;top:565.70px;font-size:10.5px;font-weight:normal;color:#737b9f;-webkit-text-stroke:0.15px #737b9f;">Avg customers/Day</div>
</body></html>
